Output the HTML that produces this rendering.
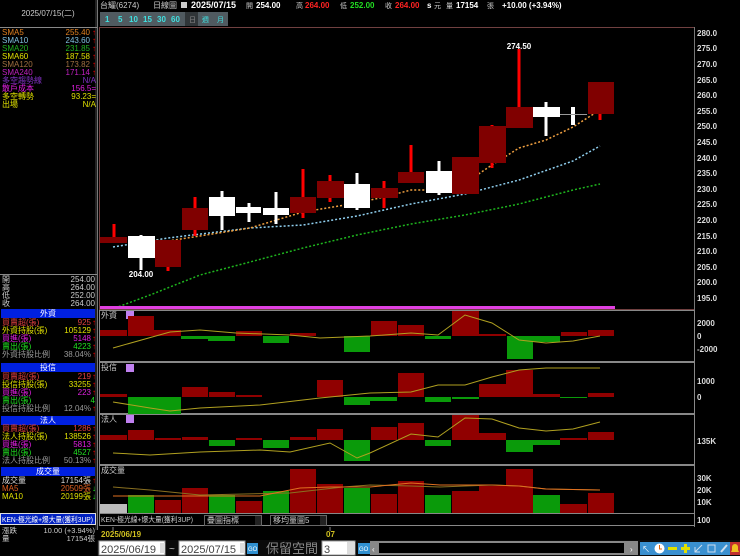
<!DOCTYPE html>
<html><head><meta charset="utf-8">
<style>
html,body{margin:0;padding:0;background:#000;width:740px;height:556px;overflow:hidden}
svg{display:block}
text{font-family:"Liberation Sans","Noto Sans CJK TC",sans-serif;font-size:8px}
.m{font-family:"Liberation Sans","Noto Sans CJK TC",sans-serif;font-size:7.5px}
.b{font-weight:bold}
</style></head><body>
<svg width="740" height="556" viewBox="0 0 740 556" xmlns="http://www.w3.org/2000/svg">
<rect width="740" height="556" fill="#000"/>
<!-- left panel -->
<line x1="97.5" y1="0" x2="97.5" y2="530" stroke="#777" stroke-width="1"/>
<line x1="96" y1="0" x2="96" y2="530" stroke="#444" stroke-width="1"/>
<text x="48" y="16" fill="#ccc" text-anchor="middle">2025/07/15(二)</text>
<line x1="0" y1="27.5" x2="97" y2="27.5" stroke="#888"/>
<g class="m">
<text x="2" y="35" fill="#e08020">SMA5</text><text x="90" y="35" fill="#e08020" text-anchor="end">255.40</text>
<text x="2" y="43" fill="#80c0e0">SMA10</text><text x="90" y="43" fill="#80c0e0" text-anchor="end">243.60</text>
<text x="2" y="51" fill="#20b020">SMA20</text><text x="90" y="51" fill="#20b020" text-anchor="end">231.85</text>
<text x="2" y="59" fill="#e0e000">SMA60</text><text x="90" y="59" fill="#e0e000" text-anchor="end">187.58</text>
<text x="2" y="67" fill="#a07040">SMA120</text><text x="90" y="67" fill="#a07040" text-anchor="end">173.82</text>
<text x="2" y="75" fill="#c020c0">SMA240</text><text x="90" y="75" fill="#c020c0" text-anchor="end">171.14</text>
<text x="2" y="83" fill="#8030c0">多空趨勢線</text><text x="96" y="83" fill="#8030c0" text-anchor="end">N/A</text>
<text x="2" y="91" fill="#e020e0">散戶成本</text><text x="96" y="91" fill="#e020e0" text-anchor="end">156.5=</text>
<text x="2" y="99" fill="#e0e000">多空轉勢</text><text x="96" y="99" fill="#e0e000" text-anchor="end">93.23=</text>
<text x="2" y="107" fill="#e0e000">出場</text><text x="96" y="107" fill="#e0e000" text-anchor="end">N/A</text>
</g>
<g fill="#f00"><text x="96" y="35" text-anchor="end">↑</text><text x="96" y="43" text-anchor="end">↑</text><text x="96" y="51" text-anchor="end">↑</text><text x="96" y="59" text-anchor="end">↑</text><text x="96" y="67" text-anchor="end">↑</text><text x="96" y="75" text-anchor="end">↑</text></g>
<line x1="0" y1="274.5" x2="97" y2="274.5" stroke="#888"/>
<g class="m" fill="#ccc">
<text x="2" y="282">開</text><text x="95" y="282" text-anchor="end">254.00</text>
<text x="2" y="290">高</text><text x="95" y="290" text-anchor="end">264.00</text>
<text x="2" y="298">低</text><text x="95" y="298" text-anchor="end">252.00</text>
<text x="2" y="306">收</text><text x="95" y="306" text-anchor="end">264.00</text>
</g>
<!-- 外資 -->
<rect x="1" y="309" width="94" height="9" fill="#0020e0"/><text x="48" y="316" fill="#fff" text-anchor="middle">外資</text>
<g class="m">
<text x="2" y="325" fill="#e04040">買賣超(張)</text><text x="91" y="325" fill="#e04040" text-anchor="end">925</text>
<text x="2" y="333" fill="#e0e000">外資持股(張)</text><text x="91" y="333" fill="#e0e000" text-anchor="end">105129</text>
<text x="2" y="341" fill="#e020e0">買進(張)</text><text x="91" y="341" fill="#e020e0" text-anchor="end">5148</text>
<text x="2" y="349" fill="#20e020">賣出(張)</text><text x="91" y="349" fill="#20e020" text-anchor="end">4223</text>
<text x="2" y="357" fill="#999">外資持股比例</text><text x="91" y="357" fill="#999" text-anchor="end">38.04%</text>
</g>
<g fill="#f00"><text x="96" y="325" text-anchor="end">↑</text><text x="96" y="333" text-anchor="end">↑</text><text x="96" y="341" text-anchor="end">↑</text><text x="96" y="349" text-anchor="end">↑</text><text x="96" y="357" text-anchor="end">↑</text></g>
<!-- 投信 -->
<rect x="1" y="363" width="94" height="9" fill="#0020e0"/><text x="48" y="370" fill="#fff" text-anchor="middle">投信</text>
<g class="m">
<text x="2" y="379" fill="#e04040">買賣超(張)</text><text x="91" y="379" fill="#e04040" text-anchor="end">219</text>
<text x="2" y="387" fill="#e0e000">投信持股(張)</text><text x="91" y="387" fill="#e0e000" text-anchor="end">33255</text>
<text x="2" y="395" fill="#e020e0">買進(張)</text><text x="91" y="395" fill="#e020e0" text-anchor="end">223</text>
<text x="2" y="403" fill="#20e020">賣出(張)</text><text x="95" y="403" fill="#20e020" text-anchor="end">4</text>
<text x="2" y="411" fill="#999">投信持股比例</text><text x="91" y="411" fill="#999" text-anchor="end">12.04%</text>
</g>
<g fill="#f00"><text x="96" y="379" text-anchor="end">↑</text><text x="96" y="387" text-anchor="end">↑</text><text x="96" y="395" text-anchor="end">↑</text><text x="96" y="411" text-anchor="end">↑</text></g>
<!-- 法人 -->
<rect x="1" y="416" width="94" height="9" fill="#0020e0"/><text x="48" y="423" fill="#fff" text-anchor="middle">法人</text>
<g class="m">
<text x="2" y="431" fill="#e04040">買賣超(張)</text><text x="91" y="431" fill="#e04040" text-anchor="end">1286</text>
<text x="2" y="439" fill="#e0e000">法人持股(張)</text><text x="91" y="439" fill="#e0e000" text-anchor="end">138526</text>
<text x="2" y="447" fill="#e020e0">買進(張)</text><text x="91" y="447" fill="#e020e0" text-anchor="end">5813</text>
<text x="2" y="455" fill="#20e020">賣出(張)</text><text x="91" y="455" fill="#20e020" text-anchor="end">4527</text>
<text x="2" y="463" fill="#999">法人持股比例</text><text x="91" y="463" fill="#999" text-anchor="end">50.13%</text>
</g>
<g fill="#f00"><text x="96" y="431" text-anchor="end">↑</text><text x="96" y="439" text-anchor="end">↑</text><text x="96" y="447" text-anchor="end">↑</text><text x="96" y="455" text-anchor="end">↑</text><text x="96" y="463" text-anchor="end">↑</text></g>
<!-- 成交量 -->
<rect x="1" y="467" width="94" height="9" fill="#0020e0"/><text x="48" y="474" fill="#fff" text-anchor="middle">成交量</text>
<g class="m">
<text x="2" y="483" fill="#ddd">成交量</text><text x="91" y="483" fill="#ddd" text-anchor="end">17154張</text>
<text x="2" y="491" fill="#e06020">MA5</text><text x="91" y="491" fill="#e06020" text-anchor="end">20509張</text>
<text x="2" y="499" fill="#e0e000">MA10</text><text x="91" y="499" fill="#e0e000" text-anchor="end">20199張</text>
</g>
<text x="96" y="483" fill="#f00" text-anchor="end">↑</text><text x="96" y="491" fill="#2e2" text-anchor="end">↓</text><text x="96" y="499" fill="#2e2" text-anchor="end">↓</text>
<rect x="0.5" y="513.5" width="95" height="11" fill="#0020c0" stroke="#ddd"/>
<text x="2" y="522" fill="#fff" class="m" textLength="91" lengthAdjust="spacingAndGlyphs">KEN-極光線+爆大量(獲利3UP)</text>
<text x="2" y="533" fill="#ccc" class="m">漲跌</text><text x="95" y="533" fill="#ccc" class="m" text-anchor="end">10.00 (+3.94%)</text>
<text x="2" y="541" fill="#ccc" class="m">量</text><text x="95" y="541" fill="#ccc" class="m" text-anchor="end">17154張</text>

<!-- top bar -->
<text x="100" y="8" fill="#ccc">台耀(6274)</text>
<text x="153" y="8" fill="#ccc">日線圖</text>
<rect x="181" y="2" width="6" height="6" fill="#ccc"/>
<text x="191" y="8" fill="#fff" class="b" style="font-size:9px">2025/07/15</text>
<text x="246" y="8" fill="#ccc" style="font-size:7px">開</text><text x="256" y="8" fill="#fff" class="b">254.00</text>
<text x="296" y="8" fill="#ccc" style="font-size:7px">高</text><text x="305" y="8" fill="#f22" class="b">264.00</text>
<text x="340" y="8" fill="#ccc" style="font-size:7px">低</text><text x="350" y="8" fill="#2d2" class="b">252.00</text>
<text x="385" y="8" fill="#ccc" style="font-size:7px">收</text><text x="395" y="8" fill="#f22" class="b">264.00</text>
<text x="427" y="8" fill="#fff" class="b">s</text><text x="434" y="8" fill="#ccc" style="font-size:7px">元</text>
<text x="446" y="8" fill="#ccc" style="font-size:7px">量</text><text x="456" y="8" fill="#fff" class="b">17154</text>
<text x="487" y="8" fill="#ccc" style="font-size:7px">張</text>
<text x="502" y="8" fill="#fff" class="b">+10.00 (+3.94%)</text>
<g>
<rect x="100" y="12" width="128" height="14" fill="#505a60"/>
<g fill="#40e0e0" class="b"><text x="105" y="22">1</text><text x="118" y="22">5</text><text x="129" y="22">10</text><text x="143" y="22">15</text><text x="157" y="22">30</text><text x="171" y="22">60</text></g>
<rect x="185" y="12" width="13" height="14" fill="#303538"/><text x="189" y="22" fill="#888" style="font-size:7px">日</text>
<text x="202" y="22" fill="#40e0e0" style="font-size:7px">週</text><text x="217" y="22" fill="#40e0e0" style="font-size:7px">月</text>
</g>

<!-- main chart frame -->
<rect x="99.5" y="27.5" width="595" height="282" fill="none" stroke="#704040"/>
<line x1="694.5" y1="27" x2="694.5" y2="527" stroke="#777"/>
<g fill="#ddd" class="b" style="font-size:8px">
<text x="697" y="36">280.0</text><text x="697" y="51">275.0</text><text x="697" y="67">270.0</text><text x="697" y="83">265.0</text><text x="697" y="98">260.0</text><text x="697" y="114">255.0</text><text x="697" y="129">250.0</text><text x="697" y="145">245.0</text><text x="697" y="161">240.0</text><text x="697" y="176">235.0</text><text x="697" y="192">230.0</text><text x="697" y="207">225.0</text><text x="697" y="223">220.0</text><text x="697" y="239">215.0</text><text x="697" y="254">210.0</text><text x="697" y="270">205.0</text><text x="697" y="285">200.0</text><text x="697" y="301">195.0</text>
</g>
<!-- MAs -->
<polyline fill="none" stroke="#1eb41e" stroke-width="1.5" stroke-dasharray="2,2" points="115,308 150,295 200,275 250,262 303,248 357,235 411,224 465,215 519,204 573,190 600,184"/>
<polyline fill="none" stroke="#90d0f0" stroke-width="1.5" stroke-dasharray="2,2" points="113,247 168,238 250,228 303,225 357,216 411,204 465,194 519,180 573,161 600,146"/>
<polyline fill="none" stroke="#f0a040" stroke-width="1.5" stroke-dasharray="2,2" points="100,238 168,241 200,236 250,228 303,212 357,203 384,197 411,190 439,190 465,183 492,165 519,148 546,140 573,127 600,110"/>
<!-- candles -->
<g fill="#f00">
<rect x="112.5" y="224" width="3" height="19"/><rect x="166.5" y="262" width="3" height="9"/><rect x="193.5" y="197" width="3" height="39"/>
<rect x="301.5" y="169" width="3" height="49"/><rect x="328.5" y="175" width="3" height="27"/><rect x="382.5" y="181" width="3" height="27"/>
<rect x="409.5" y="145" width="3" height="38"/><rect x="463.5" y="190" width="3" height="4"/><rect x="490.5" y="125" width="3" height="43"/>
<rect x="517.5" y="49" width="3" height="79"/><rect x="598.5" y="110" width="3" height="10"/>
</g>
<g fill="#800000">
<rect x="100" y="237" width="27" height="6"/><rect x="155" y="240" width="26" height="27"/><rect x="182" y="208" width="26" height="22"/>
<rect x="290" y="197" width="26" height="16"/><rect x="317" y="181" width="27" height="17"/><rect x="371" y="188" width="27" height="10"/>
<rect x="398" y="172" width="26" height="11"/><rect x="452" y="157" width="27" height="37"/><rect x="479" y="126" width="27" height="37"/>
<rect x="506" y="107" width="27" height="21"/><rect x="588" y="82" width="26" height="32"/>
</g>
<g fill="#fff">
<rect x="139.5" y="235" width="3" height="35"/><rect x="128" y="236" width="27" height="22"/>
<rect x="220.5" y="191" width="3" height="39"/><rect x="209" y="197" width="26" height="19"/>
<rect x="247.5" y="203" width="3" height="19"/><rect x="236" y="207" width="25" height="6"/>
<rect x="274.5" y="192" width="3" height="32"/><rect x="263" y="208" width="26" height="7"/>
<rect x="355.5" y="173" width="3" height="37"/><rect x="344" y="184" width="26" height="24"/>
<rect x="437.5" y="161" width="3" height="34"/><rect x="426" y="171" width="26" height="22"/>
<rect x="544.5" y="102" width="3" height="34"/><rect x="533" y="107" width="27" height="10"/>
<rect x="571" y="107" width="4" height="18"/>
</g>
<line x1="560" y1="114.5" x2="587" y2="114.5" stroke="#999"/>
<text x="519" y="49" fill="#fff" class="b" text-anchor="middle">274.50</text>
<text x="141" y="277" fill="#fff" class="b" text-anchor="middle">204.00</text>
<rect x="100" y="306" width="515" height="3" fill="#e040e0"/>

<!-- sub panels frames -->
<g fill="none" stroke="#888">
<rect x="99.5" y="310.5" width="595" height="51"/>
<rect x="99.5" y="362.5" width="595" height="51"/>
<rect x="99.5" y="414.5" width="595" height="50"/>
<rect x="99.5" y="465.5" width="595" height="48"/>
<rect x="99.5" y="513.5" width="595" height="12"/>
</g>
<g fill="#ddd" class="b">
<text x="697" y="326">2000</text><text x="697" y="339">0</text><text x="697" y="352">-2000</text>
<text x="697" y="384">1000</text><text x="697" y="400">0</text>
<text x="697" y="444">135K</text>
<text x="697" y="481">30K</text><text x="697" y="493">20K</text><text x="697" y="505">10K</text>
<text x="697" y="523">100</text>
</g>
<g fill="#ccc"><text x="101" y="318">外資</text><text x="101" y="370">投信</text><text x="101" y="422">法人</text><text x="101" y="473">成交量</text></g>
<g fill="#c080f0"><rect x="126" y="311" width="8" height="8"/><rect x="126" y="364" width="8" height="8"/><rect x="126" y="415" width="8" height="8"/></g>

<!-- 外資 bars -->
<g fill="#900000">
<rect x="100" y="330" width="27" height="6"/><rect x="128" y="316" width="26" height="20"/><rect x="154" y="330" width="27" height="6"/><rect x="236" y="331" width="26" height="5"/>
<rect x="290" y="333" width="26" height="3"/><rect x="371" y="321" width="26" height="15"/><rect x="398" y="325" width="26" height="11"/><rect x="452" y="311" width="27" height="25"/><rect x="479" y="334" width="27" height="2"/><rect x="561" y="332" width="26" height="4"/><rect x="588" y="330" width="26" height="6"/>
</g>
<g fill="#0a9a0a">
<rect x="181" y="336" width="27" height="3"/><rect x="208" y="336" width="27" height="5"/><rect x="263" y="336" width="26" height="7"/><rect x="344" y="336" width="26" height="16"/><rect x="425" y="336" width="26" height="3"/><rect x="507" y="336" width="26" height="23"/><rect x="533" y="336" width="27" height="6"/>
</g>
<polyline fill="none" stroke="#b0a020" points="113,348 170,332 200,330 236,333 290,335 320,338 370,336 411,333 438,335 465,315 492,323 519,340 546,343 573,341 600,336"/>
<!-- 投信 bars -->
<g fill="#900000">
<rect x="100" y="394" width="27" height="3"/><rect x="182" y="387" width="26" height="10"/><rect x="209" y="392" width="26" height="5"/><rect x="236" y="395" width="26" height="2"/>
<rect x="317" y="380" width="26" height="17"/><rect x="398" y="373" width="26" height="24"/><rect x="479" y="384" width="27" height="13"/><rect x="506" y="370" width="27" height="27"/><rect x="533" y="394" width="27" height="3"/><rect x="588" y="393" width="26" height="4"/>
</g>
<g fill="#0a9a0a">
<rect x="128" y="397" width="53" height="17"/><rect x="344" y="397" width="26" height="8"/><rect x="370" y="397" width="27" height="4"/><rect x="425" y="397" width="26" height="5"/><rect x="452" y="397" width="27" height="2"/><rect x="560" y="397" width="27" height="1"/>
</g>
<polyline fill="none" stroke="#b0a020" points="113,402 150,408 170,411 200,408 260,405 320,398 370,393 411,392 438,385 465,385 492,377 519,370 546,368 600,368"/>
<!-- 法人 bars -->
<g fill="#900000">
<rect x="100" y="435" width="27" height="5"/><rect x="128" y="430" width="26" height="10"/><rect x="155" y="438" width="26" height="2"/><rect x="182" y="437" width="26" height="3"/><rect x="236" y="438" width="26" height="2"/><rect x="290" y="437" width="26" height="3"/><rect x="317" y="429" width="26" height="11"/>
<rect x="371" y="427" width="26" height="13"/><rect x="398" y="423" width="26" height="17"/><rect x="452" y="415" width="27" height="25"/><rect x="479" y="433" width="27" height="7"/><rect x="560" y="438" width="27" height="2"/><rect x="588" y="432" width="26" height="8"/>
</g>
<g fill="#0a9a0a">
<rect x="209" y="440" width="26" height="6"/><rect x="263" y="440" width="26" height="8"/><rect x="344" y="440" width="26" height="21"/><rect x="425" y="440" width="26" height="6"/><rect x="506" y="440" width="27" height="12"/><rect x="533" y="440" width="27" height="5"/>
</g>
<polyline fill="none" stroke="#b0a020" points="113,453 150,455 200,452 260,450 290,452 330,443 357,458 370,453 411,434 438,437 465,418 492,419 519,428 546,431 573,429 600,422"/>
<!-- 成交量 bars -->
<rect x="100" y="504" width="27" height="9" fill="#bbb"/>
<g fill="#900000">
<rect x="155" y="500" width="26" height="13"/><rect x="182" y="488" width="26" height="25"/><rect x="236" y="501" width="26" height="12"/><rect x="290" y="469" width="26" height="44"/><rect x="317" y="484" width="26" height="29"/>
<rect x="371" y="494" width="26" height="19"/><rect x="398" y="481" width="26" height="32"/><rect x="452" y="491" width="27" height="22"/><rect x="479" y="486" width="27" height="27"/><rect x="506" y="469" width="27" height="44"/><rect x="560" y="504" width="27" height="9"/><rect x="588" y="493" width="26" height="20"/>
</g>
<g fill="#0a9a0a">
<rect x="128" y="495" width="26" height="18"/><rect x="209" y="495" width="26" height="18"/><rect x="263" y="491" width="26" height="22"/><rect x="344" y="488" width="26" height="25"/><rect x="425" y="495" width="26" height="18"/><rect x="533" y="495" width="27" height="18"/>
</g>
<polyline fill="none" stroke="#8a7020" points="113,487 150,490 200,495 290,493 343,487 370,485 411,486 440,487 492,485 519,486 546,489 600,490"/>
<polyline fill="none" stroke="#e07020" points="113,496 150,496 200,496 260,496 300,488 330,487 370,487 411,483 440,485 492,485 519,486 546,489 600,490"/>

<!-- indicator row -->
<text x="101" y="522" fill="#ccc" class="m" textLength="92" lengthAdjust="spacingAndGlyphs">KEN-極光線+爆大量(獲利3UP)</text>
<rect x="204.5" y="515.5" width="57" height="10" fill="#000" stroke="#666"/><text x="207" y="523" fill="#ccc">疊圖指標</text>
<rect x="255" y="516" width="6" height="9" fill="#222"/>
<rect x="270.5" y="515.5" width="56" height="10" fill="#000" stroke="#666"/><text x="273" y="523" fill="#ccc">移均量圖5</text>
<rect x="320" y="516" width="6" height="9" fill="#222"/>
<text x="101" y="537" fill="#d0c020" class="b">2025/06/19</text>
<line x1="113" y1="527" x2="113" y2="531" stroke="#888"/>
<text x="326" y="537" fill="#d0c020" class="b">07</text>
<line x1="330" y1="527" x2="330" y2="531" stroke="#888"/>

<!-- bottom bar -->
<rect x="97" y="540" width="643" height="16" fill="#0a0a0a"/>
<rect x="99" y="541" width="66" height="14" fill="#fff" stroke="#999"/>
<text x="101" y="553" fill="#444" style="font-size:11px">2025/06/19</text>
<rect x="160" y="543" width="5" height="10" fill="#ddd"/>
<text x="169" y="552" fill="#ccc" style="font-size:10px">~</text>
<rect x="179" y="541" width="66" height="14" fill="#fff" stroke="#999"/>
<text x="181" y="553" fill="#444" style="font-size:11px">2025/07/15</text>
<rect x="240" y="543" width="5" height="10" fill="#ddd"/>
<rect x="247" y="543" width="11" height="11" fill="#3090d0"/><text x="248" y="551" fill="#fff" style="font-size:6px">GO</text>
<text x="266" y="553" fill="#888" style="font-size:13px">保留空間</text>
<rect x="322" y="541" width="33" height="14" fill="#fff" stroke="#999"/>
<text x="324" y="553" fill="#444" style="font-size:11px">3</text>
<rect x="347" y="542" width="8" height="12" fill="#ddd"/>
<rect x="358" y="543" width="12" height="11" fill="#3090d0"/><text x="359" y="551" fill="#fff" style="font-size:6px">GO</text>
<rect x="370" y="541" width="268" height="14" fill="#888"/>
<rect x="379" y="543" width="245" height="10" fill="#000"/>
<text x="372" y="552" fill="#fff">‹</text><text x="630" y="552" fill="#fff">›</text>
<g>
<rect x="640" y="542" width="13" height="13" fill="#3a90d0"/><text x="642" y="552" fill="#fff">↖</text>
<rect x="653" y="542" width="13" height="13" fill="#3a90d0"/><circle cx="659.5" cy="548.5" r="5" fill="#fff"/><path d="M659.5 545v4h2.5" stroke="#e06000" fill="none"/>
<rect x="666" y="542" width="13" height="13" fill="#3a90d0"/><rect x="668" y="547" width="9" height="3" fill="#e0e000"/>
<rect x="679" y="542" width="13" height="13" fill="#3a90d0"/><rect x="681" y="547" width="9" height="3" fill="#e0e000"/><rect x="684" y="544" width="3" height="9" fill="#e0e000"/>
<rect x="692" y="542" width="13" height="13" fill="#3a90d0"/><path d="M695 552l7-7M695 547v5h5" stroke="#cde" fill="none"/>
<rect x="705" y="542" width="13" height="13" fill="#3a90d0"/><rect x="708" y="545" width="7" height="7" fill="none" stroke="#cde"/>
<rect x="718" y="542" width="12" height="13" fill="#3a90d0"/><path d="M721 552l6-7" stroke="#cde" stroke-width="2"/>
<rect x="730" y="542" width="10" height="13" fill="#c03030"/><path d="M731 552h8l-1-2v-3a3 3 0 0 0-6 0v3z" fill="#f0c020"/>
</g>
</svg>
</body></html>
